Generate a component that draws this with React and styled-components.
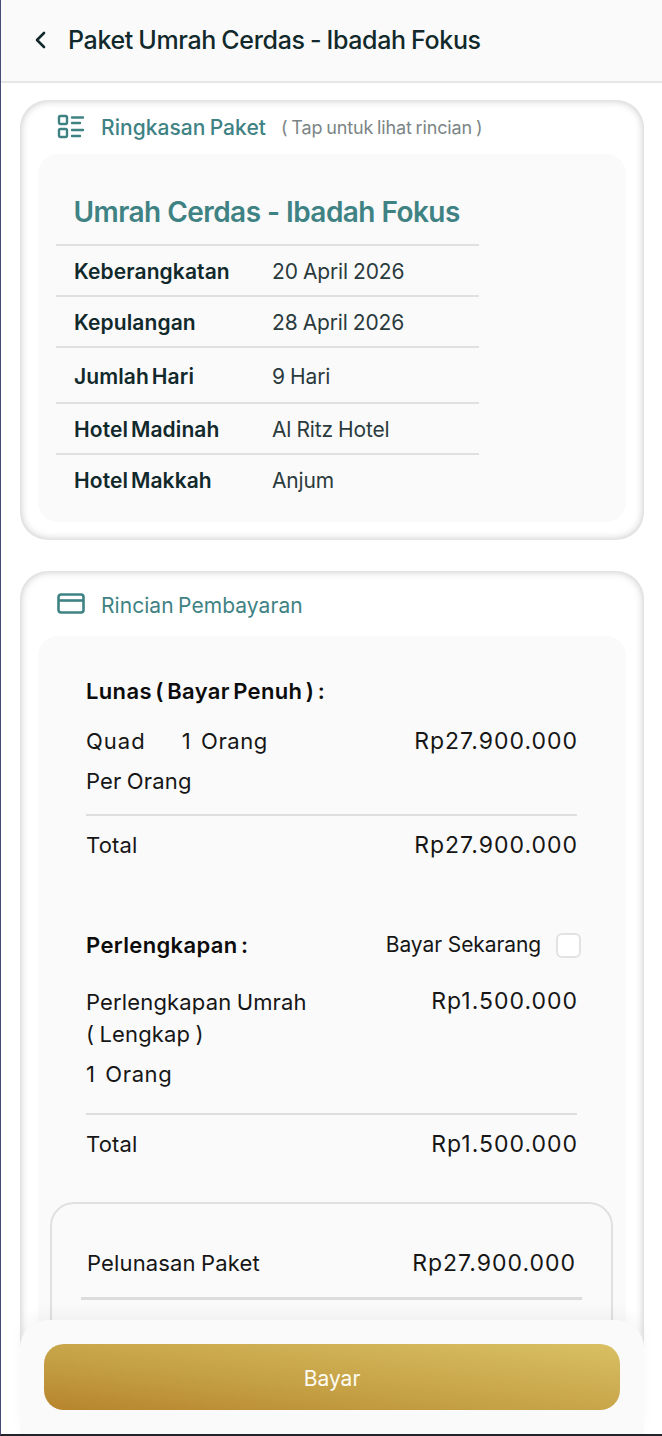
import React from "react";
import styled, { createGlobalStyle } from "styled-components";

const GlobalStyle = createGlobalStyle`
  html, body {
    margin: 0;
    padding: 0;
    background: #fff;
  }
  * {
    box-sizing: border-box;
  }
`;

const Page = styled.div`
  position: relative;
  width: 662px;
  height: 1436px;
  overflow: hidden;
  background: #fff;
  font-family: Inter, "Noto Sans", sans-serif;
  color: #111;
  border-left: 1px solid #4a4a78;
  border-bottom: 2px solid #20242a;
`;

const Header = styled.header`
  display: flex;
  align-items: center;
  gap: 19px;
  height: 83px;
  padding: 0 0 1px 30px;
  background: #fafafa;
  border-bottom: 2px solid #e6e6e6;
`;

const BackIcon = styled.svg`
  width: 18px;
  height: 24px;
  flex: none;
`;

const HeaderTitle = styled.h1`
  margin: 0;
  font-size: 25px;
  font-weight: 500;
  letter-spacing: -0.35px;
  word-spacing: -1px;
  color: #11292b;
  white-space: nowrap;
`;

const Content = styled.main`
  display: flex;
  flex-direction: column;
  gap: 31px;
  padding: 17px 18px 0 19px;
`;

const Card = styled.section`
  height: ${(p) => p.$height};
  padding: 0 18px 18px 18px;
  border-radius: 28px;
  background: #fff;
  box-shadow: inset 0 0 8px rgba(0, 0, 0, 0.25);
`;

const CardHead = styled.div`
  display: flex;
  align-items: center;
  height: ${(p) => p.$height};
  padding: ${(p) => p.$pad || "0"} 0 0 19px;
  color: #3f8284;
`;

const HeadIcon = styled.svg`
  width: 28px;
  height: 28px;
  flex: none;
  margin-right: 16px;
`;

const CardTitle = styled.h2`
  margin: 0;
  font-size: 21px;
  font-weight: ${(p) => p.$weight || 400};
  letter-spacing: 0.05px;
  word-spacing: -1.5px;
  white-space: nowrap;
`;

const Hint = styled.span`
  margin-left: 15px;
  font-size: 18px;
  letter-spacing: -0.15px;
  word-spacing: -1px;
  color: #7b8586;
  white-space: nowrap;
`;

const Panel = styled.div`
  background: #fafafa;
  border-radius: 20px;
`;

const SummaryPanel = styled(Panel)`
  height: 368px;
  padding: 27px 0 0 18px;
`;

const PackageName = styled.h3`
  margin: 0;
  height: 63px;
  padding-left: 17.5px;
  font-size: 28px;
  line-height: 62px;
  font-weight: 600;
  letter-spacing: -0.55px;
  color: #3f8284;
  white-space: nowrap;
`;

const InfoRow = styled.div`
  display: flex;
  align-items: center;
  width: 423px;
  height: ${(p) => p.$height}px;
  padding: 2px 0 0 18px;
  font-size: 21px;
  letter-spacing: 0.1px;
  word-spacing: -2.5px;
  border-top: 2px solid #e0e0e0;
`;

const InfoLabel = styled.span`
  width: 198px;
  flex: none;
  font-weight: 600;
  color: #11292b;
`;

const InfoValue = styled.span`
  color: #2b3b3d;
  font-weight: 400;
  letter-spacing: -0.15px;
  word-spacing: -0.6px;
`;

const PaymentPanel = styled(Panel)`
  padding: 40px 13px 0 12px;
`;

const Block = styled.div`
  padding: 0 36px;
`;

const GroupTitle = styled.h4`
  margin: 0;
  font-size: 22px;
  font-weight: 600;
  letter-spacing: 0.35px;
  word-spacing: -2.5px;
  line-height: 30px;
  color: #0c0c0c;
`;

const SplitRow = styled.div`
  display: flex;
  align-items: ${(p) => (p.$center ? "center" : "flex-start")};
  justify-content: space-between;
  margin-top: ${(p) => p.$top || 0}px;
  font-size: 22px;
  line-height: 30px;
  letter-spacing: 0.15px;
  word-spacing: -1px;
  color: #161616;
`;

const PlainText = styled.div`
  font-size: 22px;
  line-height: ${(p) => p.$line || 30}px;
  margin-top: ${(p) => p.$top || 0}px;
  letter-spacing: 0.15px;
  word-spacing: -1px;
  color: #161616;
`;

const RoomType = styled.span`
  letter-spacing: 1px;
`;

const Quantity = styled.span`
  margin-left: ${(p) => p.$left || 0}px;
  letter-spacing: 0.6px;
  word-spacing: 3px;
`;

const Money = styled.span`
  margin-right: -1px;
  font-size: 23px;
  letter-spacing: 1px;
  white-space: nowrap;
`;

const TotalRow = styled(SplitRow)`
  border-top: 2px solid #dedede;
  margin-top: ${(p) => p.$top}px;
  padding-top: 14px;
`;

const PayNow = styled.label`
  display: flex;
  align-items: center;
  gap: 15px;
  margin-right: -4px;
  font-size: 21px;
  letter-spacing: -0.1px;
  word-spacing: 0;
  font-weight: 400;
`;

const CheckBox = styled.span`
  width: 25px;
  height: 25px;
  background: #fff;
  border: 2px solid #e2e2e2;
  border-radius: 6px;
`;

const SettleBox = styled.div`
  margin-top: 43px;
  height: 300px;
  padding: 44px 29px 0 29px;
  border: 2px solid #e0e0e0;
  border-radius: 24px;
`;

const SettleRow = styled(SplitRow)`
  padding: 0 7px 19px 6px;
  border-bottom: 3px solid #dcdcdc;
`;

const Footer = styled.footer`
  position: absolute;
  left: 19px;
  right: 18px;
  bottom: 0;
  height: 114px;
  padding: 24px 24px 0 24px;
  background: #fafafa;
  border-radius: 28px 28px 0 0;
  box-shadow: 0 -8px 14px rgba(0, 0, 0, 0.035);
`;

const PayButton = styled.button`
  display: block;
  width: 100%;
  height: 66px;
  padding: 2px 0 0;
  border: 0;
  border-radius: 20px;
  background: linear-gradient(to top right, #b7862d 2%, #c5a045 40%, #d9c063 100%);
  color: #fdfbf2;
  font-family: inherit;
  font-size: 21px;
  font-weight: 400;
`;

const infoRows = [
  ["Keberangkatan", "20 April 2026", 51],
  ["Kepulangan", "28 April 2026", 51],
  ["Jumlah Hari", "9 Hari", 56],
  ["Hotel Madinah", "Al Ritz Hotel", 51],
  ["Hotel Makkah", "Anjum", 51],
];

export default function App() {
  return (
    <Page>
      <GlobalStyle />
      <Header>
        <BackIcon viewBox="0 0 18 24" fill="none" stroke="#11292b" strokeWidth="2.6" strokeLinecap="round" strokeLinejoin="round">
          <path d="M13 5 L6 12 L13 19" />
        </BackIcon>
        <HeaderTitle>Paket Umrah Cerdas - Ibadah Fokus</HeaderTitle>
      </Header>

      <Content>
        <Card $height="440px">
          <CardHead $height="54px">
            <HeadIcon viewBox="0 0 28 28" fill="none" stroke="currentColor" strokeWidth="2.4" strokeLinecap="round">
              <rect x="2" y="3" width="8" height="8" rx="1.5" />
              <rect x="2" y="16" width="8" height="8" rx="1.5" />
              <path d="M15 4.5 H26 M15 10 H23 M15 17 H26 M15 23 H23" />
            </HeadIcon>
            <CardTitle $weight={500}>Ringkasan Paket</CardTitle>
            <Hint>( Tap untuk lihat rincian )</Hint>
          </CardHead>
          <SummaryPanel>
            <PackageName>Umrah Cerdas - Ibadah Fokus</PackageName>
            {infoRows.map(([label, value, height]) => (
              <InfoRow key={label} $height={height}>
                <InfoLabel>{label}</InfoLabel>
                <InfoValue>{value}</InfoValue>
              </InfoRow>
            ))}
          </SummaryPanel>
        </Card>

        <Card $height="900px">
          <CardHead $height="65px" $pad="4px">
            <HeadIcon viewBox="0 0 28 28" fill="none" stroke="currentColor" strokeWidth="2.6" strokeLinejoin="round">
              <rect x="1.5" y="2.5" width="25" height="18" rx="2.5" />
              <path d="M1.5 8.5 H26.5" />
            </HeadIcon>
            <CardTitle>Rincian Pembayaran</CardTitle>
          </CardHead>
          <PaymentPanel>
            <Block>
              <GroupTitle>Lunas ( Bayar Penuh ) :</GroupTitle>
              <SplitRow $top={20}>
                <span>
                  <RoomType>Quad</RoomType>
                  <Quantity $left={36}>1 Orang</Quantity>
                </span>
                <Money>Rp27.900.000</Money>
              </SplitRow>
              <PlainText $top={10}>Per Orang</PlainText>
              <TotalRow $top={18}>
                <span>Total</span>
                <Money>Rp27.900.000</Money>
              </TotalRow>

              <SplitRow $center $top={70}>
                <GroupTitle>Perlengkapan :</GroupTitle>
                <PayNow>
                  Bayar Sekarang
                  <CheckBox />
                </PayNow>
              </SplitRow>
              <SplitRow $top={26}>
                <PlainText $line={32}>
                  Perlengkapan Umrah
                  <br />( Lengkap )
                </PlainText>
                <Money>Rp1.500.000</Money>
              </SplitRow>
              <PlainText $top={9}>
                <Quantity>1 Orang</Quantity>
              </PlainText>
              <TotalRow $top={24}>
                <span>Total</span>
                <Money>Rp1.500.000</Money>
              </TotalRow>
            </Block>

            <SettleBox>
              <SettleRow>
                <span>Pelunasan Paket</span>
                <Money>Rp27.900.000</Money>
              </SettleRow>
            </SettleBox>
          </PaymentPanel>
        </Card>
      </Content>

      <Footer>
        <PayButton>Bayar</PayButton>
      </Footer>
    </Page>
  );
}
